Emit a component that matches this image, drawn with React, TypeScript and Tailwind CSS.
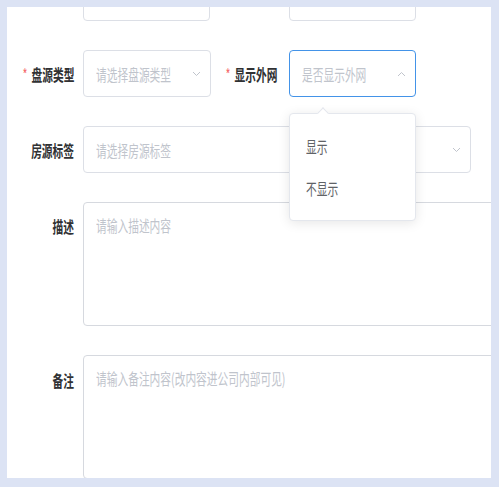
import React from 'react';

function Chevron({ up = false }: { up?: boolean }) {
    return (
        <svg width="9" height="6" viewBox="0 0 9 6" className="shrink-0">
            <polyline
                points={up ? '1,5 4.5,1.5 8,5' : '1,1 4.5,4.5 8,1'}
                fill="none"
                stroke="#c0c4cc"
                strokeWidth="1"
            />
        </svg>
    );
}

// text in the shot is narrow, so every run is squeezed horizontally
const squeeze = 'inline-block scale-x-[0.67] whitespace-nowrap text-[16px] leading-[20px]';

function Label({ text, required = false, width, pr }: { text: string; required?: boolean; width: string; pr: string }) {
    return (
        <div className={`${width} ${pr} shrink-0 flex justify-end`}>
            <span className={`${squeeze} origin-right font-bold text-[#303133]`}>
                {required && <span className="mr-[6px] font-normal text-[#f56c6c]">*</span>}
                {text}
            </span>
        </div>
    );
}

function SelectBox({ placeholder, width, focused = false, open = false }: { placeholder: string; width: string; focused?: boolean; open?: boolean }) {
    return (
        <div
            className={`${width} h-[47px] shrink-0 rounded-[4px] border bg-white pl-[12px] pr-[9px] flex items-center gap-2 ${focused ? 'border-[#4393e8]' : 'border-[#dcdfe6]'}`}
        >
            <div className="flex-1 min-w-0">
                <span className={`${squeeze} origin-left text-[#c0c4cc]`}>{placeholder}</span>
            </div>
            <Chevron up={open} />
        </div>
    );
}

function TextArea({ placeholder }: { placeholder: string }) {
    return (
        <div className="w-[440px] h-[124px] shrink-0 rounded-[4px] border border-[#d6d9df] bg-white pl-[12px] pt-[10px]">
            <span className={`${squeeze} origin-left text-[#c0c4cc]`}>{placeholder}</span>
        </div>
    );
}

export default function App() {
    return (
        <div className="w-[499px] h-[487px] bg-[#dce3f4] pt-[7px] pl-[7px] pr-[8px] pb-[9px] font-['Noto_Sans_CJK_SC','Noto_Sans',sans-serif]">
            <div className="relative h-full bg-white overflow-hidden">
                <div className="mt-[-33px] flex flex-col gap-[29px]">
                    {/* previous row, scrolled out */}
                    <div className="flex items-center">
                        <div className="w-[76px] shrink-0" />
                        <div className="w-[127px] h-[47px] shrink-0 rounded-[4px] border border-[#dcdfe6]" />
                        <div className="w-[79px] shrink-0" />
                        <div className="w-[127px] h-[47px] shrink-0 rounded-[4px] border border-[#dcdfe6]" />
                    </div>

                    <div className="flex items-center">
                        <Label text="盘源类型" required width="w-[76px]" pr="pr-[9px]" />
                        <SelectBox placeholder="请选择盘源类型" width="w-[128px]" />
                        <Label text="显示外网" required width="w-[78px]" pr="pr-[12px]" />
                        <SelectBox placeholder="是否显示外网" width="w-[127px]" focused open />
                    </div>

                    <div className="flex items-center">
                        <Label text="房源标签" width="w-[76px]" pr="pr-[9px]" />
                        <SelectBox placeholder="请选择房源标签" width="w-[388px]" />
                    </div>

                    <div className="flex items-start">
                        <div className="h-[47px] flex items-center">
                            <Label text="描述" width="w-[76px]" pr="pr-[9px]" />
                        </div>
                        <TextArea placeholder="请输入描述内容" />
                    </div>

                    <div className="flex items-start">
                        <div className="h-[49px] flex items-center">
                            <Label text="备注" width="w-[76px]" pr="pr-[9px]" />
                        </div>
                        <TextArea placeholder="请输入备注内容(改内容进公司内部可见)" />
                    </div>
                </div>

                {/* dropdown of 显示外网 */}
                <div className="absolute left-[282px] top-[106px] w-[127px] rounded-[4px] border border-[#e4e7ed] bg-white py-[11px] shadow-[0_2px_12px_rgba(0,0,0,0.1)]">
                    <div className="absolute left-[29px] top-[-5px] w-[8px] h-[8px] rotate-45 border-l border-t border-[#e4e7ed] bg-white" />
                    {['显示', '不显示'].map(item => (
                        <div key={item} className="h-[42px] pl-[16px] flex items-center">
                            <span className={`${squeeze} origin-left text-[#606266]`}>{item}</span>
                        </div>
                    ))}
                </div>
            </div>
        </div>
    );
}
